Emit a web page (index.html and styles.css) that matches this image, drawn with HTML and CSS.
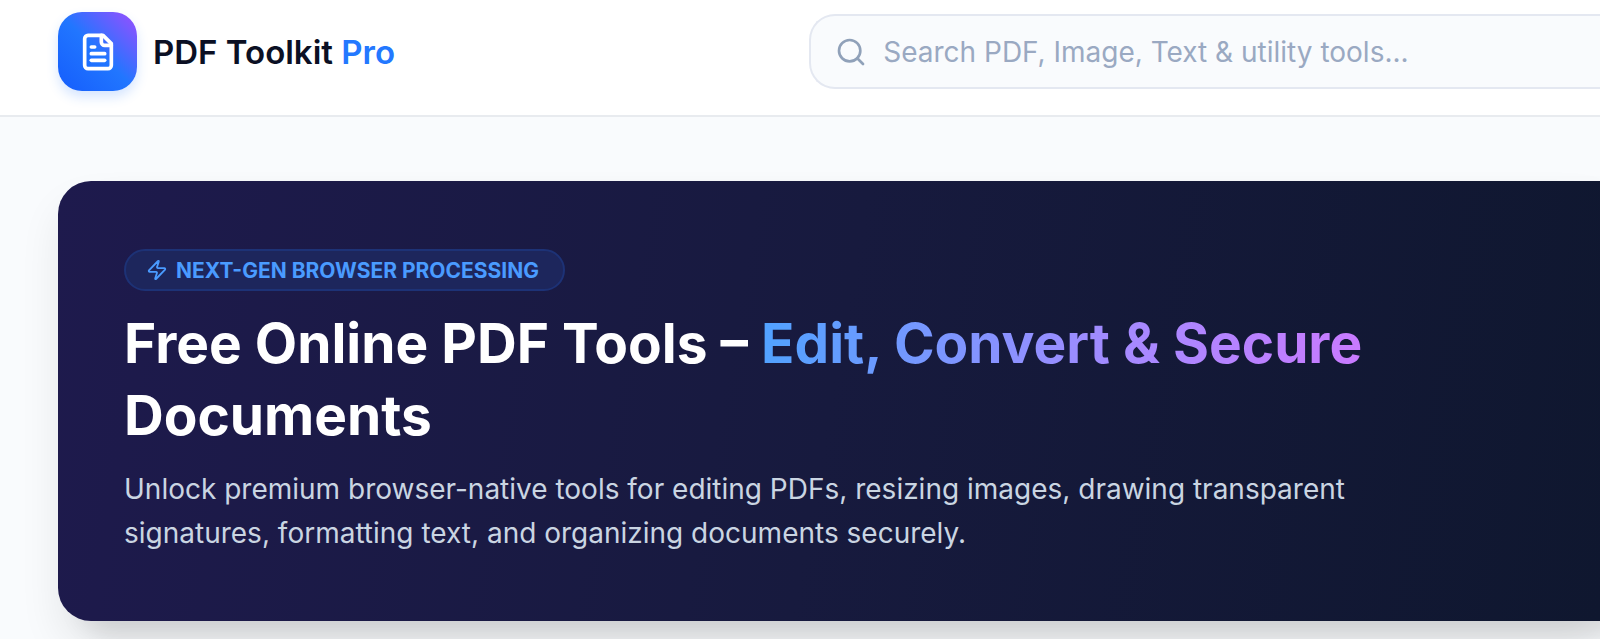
FILE: index.html
```
<!DOCTYPE html>
<html lang="en">
<head>
  <meta charset="UTF-8">
  <meta name="viewport" content="width=device-width, initial-scale=1.0">
  <title>PDF Toolkit Pro</title>
  <link rel="stylesheet" href="styles.css">
</head>
<body>
  <header class="topbar">
    <a class="brand" href="#">
      <span class="brand-logo">
        <svg class="brand-icon" viewBox="0 0 24 24" fill="none" stroke="currentColor" stroke-width="2.2" stroke-linecap="round" stroke-linejoin="round" aria-hidden="true">
          <path d="M15 2H6a2 2 0 0 0-2 2v16a2 2 0 0 0 2 2h12a2 2 0 0 0 2-2V7Z"/>
          <path d="M14 2v4a2 2 0 0 0 2 2h4"/>
          <path d="M10 9H8"/>
          <path d="M16 13H8"/>
          <path d="M16 17H8"/>
        </svg>
      </span>
      <span class="brand-name">PDF Toolkit <span class="brand-pro">Pro</span></span>
    </a>
    <form class="search" role="search">
      <svg class="search-icon" viewBox="0 0 24 24" fill="none" stroke="currentColor" stroke-width="2" stroke-linecap="round" stroke-linejoin="round" aria-hidden="true">
        <circle cx="11" cy="11" r="8"/>
        <path d="m21 21-4.3-4.3"/>
      </svg>
      <input class="search-input" type="search" aria-label="Search tools" placeholder="Search PDF, Image, Text &amp; utility tools...">
    </form>
  </header>

  <main class="content">
    <section class="hero">
      <span class="badge">
        <svg class="badge-icon" viewBox="0 0 24 24" fill="none" stroke="currentColor" stroke-width="2" stroke-linecap="round" stroke-linejoin="round" aria-hidden="true">
          <path d="M4 14a1 1 0 0 1-.78-1.63l9.9-10.2a.5.5 0 0 1 .86.46l-1.92 6.02A1 1 0 0 0 13 10h7a1 1 0 0 1 .78 1.63l-9.9 10.2a.5.5 0 0 1-.86-.46l1.92-6.02A1 1 0 0 0 11 14z"/>
        </svg>
        NEXT-GEN BROWSER PROCESSING
      </span>
      <h1 class="hero-title">Free Online PDF Tools – <span class="hero-accent">Edit, Convert &amp; Secure</span> Documents</h1>
      <p class="hero-text">Unlock premium browser-native tools for editing PDFs, resizing images, drawing transparent signatures, formatting text, and organizing documents securely.</p>
    </section>
  </main>
</body>
</html>
```
FILE: styles.css
```
*{box-sizing:border-box}
body{margin:0;min-height:100vh;overflow-x:hidden;background:#f9fbfd;color:#0f172b;font-family:Inter,sans-serif}

/* top bar */
.topbar{display:grid;grid-template-columns:19fr 20fr;align-items:center;padding:12px 0 24px 58px;background:#fff;border-bottom:2px solid #e8ebef}
.brand{display:flex;align-items:center;gap:16px;color:#0b1024;text-decoration:none}
.brand-logo{display:flex;align-items:center;justify-content:center;width:79px;height:79px;border-radius:24px;background:linear-gradient(45deg,#155dfc,#2176ff 50%,#9c4dff);color:#fff;box-shadow:0 6px 12px rgba(43,127,255,.2)}
.brand-icon{width:40px;height:40px}
.brand-name{font-size:33px;font-weight:600;white-space:nowrap}
.brand-pro{color:#2378ff}
.search{display:flex;align-items:center;gap:16px;height:75px;padding-left:24px;background:#f9fbfd;border:2px solid #e4e8f1;border-right:0;border-radius:26px 0 0 26px}
.search-icon{flex:none;width:32px;height:32px;color:#90a1b9}
.search-input{flex:1;min-width:0;padding:0;border:0;outline:0;background:transparent;color:#0f172b;font:400 28px Inter,sans-serif}
.search-input::placeholder{color:#9aa9c2;opacity:1}

/* hero */
.content{padding:64px 0 0 58px}
.hero{padding:68px 0 66px 66px;border-radius:33px 0 0 33px;background:linear-gradient(100deg,#1e1a4d,#171a3e 50%,#0f172f);box-shadow:0 24px 40px rgba(0,0,0,.08),24px 16px 24px rgba(0,0,0,.1)}
.badge{display:flex;align-items:center;gap:8px;width:fit-content;height:42px;padding:0 24px 0 20px;border:2px solid #1d3276;border-radius:21px;background:#1d265c;color:#4a9bff;font-size:21px;font-weight:700;white-space:nowrap}
.badge-icon{width:22px;height:22px}
.hero-title{max-width:1400px;margin:16px 0;color:#fff;font-size:55px;line-height:72px;font-weight:700}
.hero-accent{background:linear-gradient(90deg,#51a2ff,#a58aff 60%,#c97aff);background-clip:text;-webkit-background-clip:text;color:transparent}
.hero-text{max-width:1300px;margin:0;color:#cad5e2;font-size:28px;line-height:44px}
```
